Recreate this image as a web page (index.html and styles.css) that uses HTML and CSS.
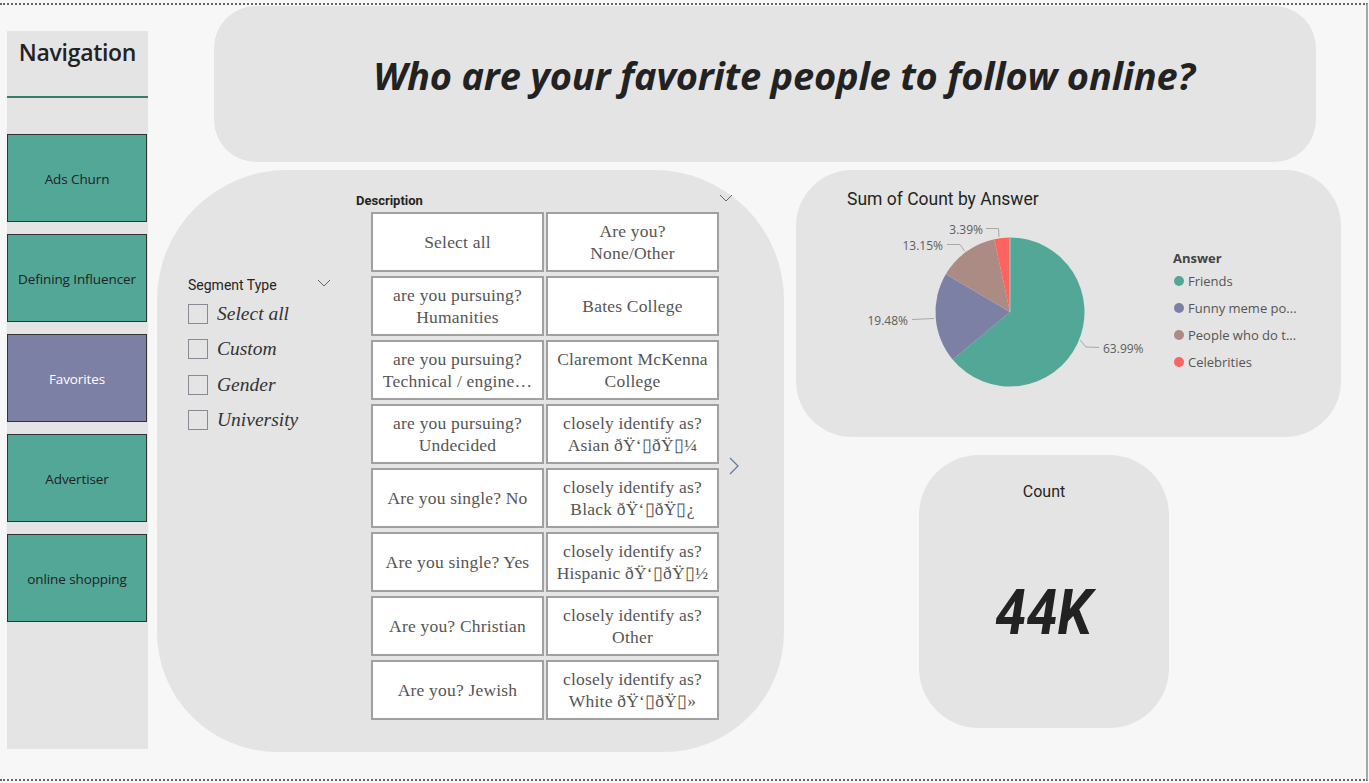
FILE: index.html
```html
<!DOCTYPE html>
<html lang="en">
<head>
<meta charset="utf-8">
<title>Favorites</title>
<link rel="stylesheet" href="styles.css">
</head>
<body>
<div class="frame">
  <aside class="nav">
    <div class="nav-head">Navigation</div>
    <div class="nav-rule"></div>
    <div class="nav-list">
      <div class="nav-btn">Ads Churn</div>
      <div class="nav-btn">Defining Influencer</div>
      <div class="nav-btn active">Favorites</div>
      <div class="nav-btn">Advertiser</div>
      <div class="nav-btn">online shopping</div>
    </div>
  </aside>
  <main class="main">
    <header class="title-card">
      <h1 class="title">Who are your favorite people to follow online?</h1>
    </header>
    <div class="lower">
      <section class="slicer-card">
        <div class="segment">
          <div class="seg-head"><span>Segment Type</span><svg class="chev" width="14" height="8" viewBox="0 0 14 8"><path d="M1 1 L7 7 L13 1" fill="none" stroke="#666" stroke-width="1"/></svg></div>
          <label class="check"><span class="box"></span>Select all</label>
          <label class="check"><span class="box"></span>Custom</label>
          <label class="check"><span class="box"></span>Gender</label>
          <label class="check"><span class="box"></span>University</label>
        </div>
        <div class="desc">
          <div class="desc-head"><span>Description</span><svg class="chev" width="14" height="8" viewBox="0 0 14 8"><path d="M1 1 L7 7 L13 1" fill="none" stroke="#666" stroke-width="1"/></svg></div>
          <div class="desc-body">
            <div class="tiles">
              <div class="tile">Select all</div>
              <div class="tile">Are you?<br>None/Other</div>
              <div class="tile">are you pursuing?<br>Humanities</div>
              <div class="tile">Bates College</div>
              <div class="tile">are you pursuing?<br>Technical / engine…</div>
              <div class="tile">Claremont McKenna<br>College</div>
              <div class="tile">are you pursuing?<br>Undecided</div>
              <div class="tile">closely identify as?<br>Asian ðŸ‘&#9647;ðŸ&#9647;¼</div>
              <div class="tile">Are you single? No</div>
              <div class="tile">closely identify as?<br>Black ðŸ‘&#9647;ðŸ&#9647;¿</div>
              <div class="tile">Are you single? Yes</div>
              <div class="tile">closely identify as?<br>Hispanic ðŸ‘&#9647;ðŸ&#9647;½</div>
              <div class="tile">Are you? Christian</div>
              <div class="tile">closely identify as?<br>Other</div>
              <div class="tile">Are you? Jewish</div>
              <div class="tile">closely identify as?<br>White ðŸ‘&#9647;ðŸ&#9647;»</div>
            </div>
            <svg class="next" width="12" height="20" viewBox="0 0 12 20"><path d="M2 2 L10 10 L2 18" fill="none" stroke="#6a7a9a" stroke-width="1.3"/></svg>
          </div>
        </div>
      </section>
      <div class="right-col">
        <section class="pie-card">
          <div class="pie-title">Sum of Count by Answer</div>
          <div class="pie-body">
            <svg class="pie" width="300" height="180" viewBox="0 0 300 180">
              <g transform="translate(-856 -215)">
                <path d="M1010 312 L1010 237.5 A74.5 74.5 0 1 1 952.6 359.5 Z" fill="#52a797"/>
                <path d="M1010 312 L952.6 359.5 A74.5 74.5 0 0 1 945.8 274.2 Z" fill="#7b80a4"/>
                <path d="M1010 312 L945.8 274.2 A74.5 74.5 0 0 1 994.3 239.2 Z" fill="#ac8b85"/>
                <path d="M1010 312 L994.3 239.2 A74.5 74.5 0 0 1 1010 237.5 Z" fill="#fd6361"/>
                <path d="M1010 312 L1010 237.5" stroke="#e4e4e4" stroke-width="0.6" fill="none"/>
                <g fill="none" stroke="#a8a8a8" stroke-width="1">
                  <path d="M986 228.5 L998.5 228.5 L999 237"/>
                  <path d="M947 244.5 L960 244.5 L964.5 251"/>
                  <path d="M912 319.5 L934 318.5"/>
                  <path d="M1080 340 L1086 347 L1099 347.5"/>
                </g>
                <g class="plabel">
                  <text x="983" y="234" text-anchor="end">3.39%</text>
                  <text x="943" y="250" text-anchor="end">13.15%</text>
                  <text x="908" y="325" text-anchor="end">19.48%</text>
                  <text x="1103" y="353">63.99%</text>
                </g>
              </g>
            </svg>
            <div class="legend">
              <div class="legend-head">Answer</div>
              <div class="legend-item"><span class="dot teal"></span>Friends</div>
              <div class="legend-item"><span class="dot purple"></span>Funny meme po...</div>
              <div class="legend-item"><span class="dot brown"></span>People who do t...</div>
              <div class="legend-item"><span class="dot red"></span>Celebrities</div>
            </div>
          </div>
        </section>
        <section class="count-card">
          <div class="count-label">Count</div>
          <div class="count-value">44K</div>
        </section>
      </div>
    </div>
  </main>
</div>
</body>
</html>
```

FILE: styles.css
```css
* { box-sizing: border-box; }
html, body { margin: 0; padding: 0; }
body {
  background: #f7f7f7;
  font-family: "Open Sans", "Noto Sans", sans-serif;
  color: #222;
  width: 1369px;
  height: 783px;
  overflow: hidden;
}
.frame {
  margin-top: 3px;
  width: 1368px;
  height: 778px;
  border-top: 2px dotted #666;
  border-bottom: 2px dotted #666;
  border-right: 2px solid #a8a8a8;
  display: flex;
  align-items: flex-start;
}

/* Navigation */
.nav {
  margin-left: 7px;
  margin-top: 26px;
  width: 141px;
  height: 718px;
  background: #e4e4e4;
  display: flex;
  flex-direction: column;
}
.nav-head {
  height: 43px;
  padding-top: 5px;
  text-align: center;
  font-family: "Open Sans", sans-serif;
  font-weight: 600;
  font-size: 23px;
  letter-spacing: -0.3px;
  color: #222;
  line-height: 32px;
}
.nav-rule {
  margin-top: 22px;
  height: 2px;
  background: #3b7b6c;
}
.nav-list {
  margin-top: 36px;
  display: flex;
  flex-direction: column;
  gap: 12px;
}
.nav-btn {
  height: 88px;
  width: 140px;
  background: #52a797;
  border: 1.5px solid #333;
  display: flex;
  align-items: center;
  justify-content: center;
  padding-top: 2px;
  font-size: 13.5px;
  color: #222;
  letter-spacing: -0.1px;
}
.nav-btn.active {
  background: #7b80a4;
  color: #fff;
}

/* Main */
.main {
  margin-left: 9px;
  margin-top: 1px;
  display: flex;
  flex-direction: column;
}
.title-card {
  margin-left: 57px;
  width: 1102px;
  height: 156px;
  background: #e4e4e4;
  border-radius: 42px;
  display: flex;
  align-items: center;
  justify-content: center;
  padding-left: 38px;
  padding-bottom: 18px;
}
.title {
  margin: 0;
  font-family: "Open Sans", sans-serif;
  font-style: italic;
  font-weight: 700;
  font-size: 38px;
  letter-spacing: -0.2px;
  color: #222;
}
.lower {
  margin-top: 8px;
  display: flex;
  gap: 12px;
}

/* Slicer card */
.slicer-card {
  width: 627px;
  height: 582px;
  background: #e4e4e4;
  border-radius: 130px 130px 120px 120px;
  display: flex;
  padding-left: 31px;
}
.segment {
  width: 143px;
  padding-top: 104px;
  display: flex;
  flex-direction: column;
}
.seg-head {
  display: flex;
  align-items: center;
  justify-content: space-between;
  font-family: Roboto, sans-serif;
  font-size: 14px;
  color: #252423;
  height: 22px;
  margin-bottom: 0;
}
.seg-head .chev { margin-top: -4px; }
.check {
  display: flex;
  align-items: center;
  height: 35.5px;
  font-family: "Liberation Serif", serif;
  font-style: italic;
  font-size: 19.5px;
  color: #333;
}
.box {
  width: 20px;
  height: 20px;
  border: 1px solid #8a8a94;
  margin-right: 9px;
  flex: none;
}
.desc {
  margin-left: 25px;
  padding-top: 22px;
  display: flex;
  flex-direction: column;
}
.desc-head {
  display: flex;
  align-items: center;
  justify-content: space-between;
  width: 377px;
  font-family: Roboto, sans-serif;
  font-weight: 700;
  font-size: 13px;
  color: #252423;
  height: 17px;
}
.desc-head .chev { margin-top: -6px; }
.desc-body {
  display: flex;
  align-items: center;
  margin-left: 15px;
  margin-top: 3px;
}
.tiles {
  display: grid;
  grid-template-columns: 173px 173px;
  grid-auto-rows: 60px;
  column-gap: 2px;
  row-gap: 4px;
}
.tile {
  background: #fff;
  border: 2px solid #a0a0a0;
  display: flex;
  align-items: center;
  justify-content: center;
  text-align: center;
  font-family: "Liberation Serif", serif;
  font-size: 17.5px;
  letter-spacing: 0.2px;
  line-height: 22px;
  color: #555;
  white-space: nowrap;
  overflow: hidden;
}
.next { margin-left: 9px; margin-top: 0; }

/* Right column */
.right-col {
  display: flex;
  flex-direction: column;
}
.pie-card {
  width: 545px;
  height: 267px;
  background: #e4e4e4;
  border-radius: 56px;
  padding: 18px 0 0 51px;
}
.pie-title {
  font-family: Roboto, sans-serif;
  font-size: 17.5px;
  color: #252423;
  line-height: 22px;
  margin-top: 0;
}
.pie-body {
  display: flex;
  margin-top: 5px;
  margin-left: 9px;
}
.pie { display: block; }
.plabel text {
  font-family: "Open Sans", sans-serif;
  font-size: 12px;
  fill: #605e5c;
}
.legend {
  margin-left: 17px;
  margin-top: 33px;
  display: flex;
  flex-direction: column;
}
.legend-head {
  font-family: "Open Sans", sans-serif;
  font-weight: 700;
  font-size: 13px;
  color: #444;
  height: 22px;
  line-height: 20px;
}
.legend-item {
  display: flex;
  align-items: center;
  height: 27px;
  font-family: "Open Sans", sans-serif;
  font-size: 13px;
  color: #555;
  margin-top: -3px;
  margin-bottom: 3px;
}
.dot {
  width: 10px;
  height: 10px;
  border-radius: 50%;
  margin-right: 4px;
  margin-left: 1px;
}
.teal { background: #52a797; }
.purple { background: #7b80a4; }
.brown { background: #ac8b85; }
.red { background: #fd6361; }

.count-card {
  margin-top: 18px;
  margin-left: 123px;
  width: 250px;
  height: 273px;
  background: #e4e4e4;
  border-radius: 60px;
  display: flex;
  flex-direction: column;
  align-items: center;
  padding-top: 26px;
}
.count-label {
  font-family: Roboto, sans-serif;
  font-size: 16px;
  color: #252423;
  line-height: 22px;
}
.count-value {
  margin-top: 75px;
  font-family: Roboto, sans-serif;
  font-style: italic;
  font-weight: 700;
  font-size: 62px;
  line-height: 70px;
  color: #222;
  transform: scaleX(0.9);
}
```
